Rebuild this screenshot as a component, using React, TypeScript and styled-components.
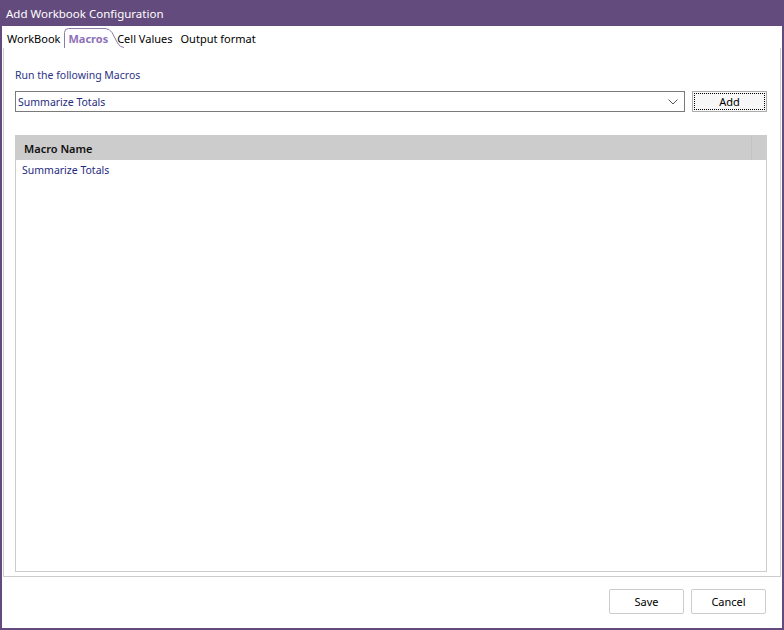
import React from 'react';
import styled, { createGlobalStyle } from 'styled-components';

const GlobalStyle = createGlobalStyle`
  html, body {
    margin: 0;
    padding: 0;
    background: #ffffff;
  }
  body {
    font-family: 'Noto Sans', 'Open Sans', Arial, sans-serif;
  }
  * {
    box-sizing: border-box;
  }
`;

const Window = styled.div`
  width: 784px;
  height: 630px;
  display: flex;
  flex-direction: column;
  background: #ffffff;
  border: 2px solid #644b7d;
  border-top: none;
`;

const TitleBar = styled.div`
  height: 26px;
  flex: none;
  display: flex;
  align-items: center;
  margin: 0 -2px;
  padding-left: 6px;
  background: #644b7d;
  color: #ffffff;
  font-size: 11.5px;
`;

const TabStrip = styled.div`
  height: 22px;
  flex: none;
  display: flex;
  align-items: flex-end;
  padding-left: 1px;
`;

const Tab = styled.div<{ $active?: boolean }>`
  position: relative;
  height: 20px;
  display: flex;
  align-items: center;
  padding: ${(p) => (p.$active ? '0 14px 0 4px' : '0 4px')};
  margin-right: ${(p) => (p.$active ? '-9px' : '0')};
  font-size: 11px;
  font-weight: ${(p) => (p.$active ? 700 : 400)};
  color: ${(p) => (p.$active ? '#8c72b8' : '#000000')};
  span {
    position: relative;
  }
`;

const TabShape = styled.svg`
  position: absolute;
  left: 0;
  top: 0;
`;

const TabPanel = styled.div`
  flex: 1;
  margin: 0 1px;
  display: flex;
  flex-direction: column;
  border: 1px solid #cccccc;
  border-top: none;
  padding: 20px 13px 4px 11px;
`;

const Label = styled.div`
  font-size: 10.5px;
  line-height: 15px;
  color: #2b3486;
  margin-bottom: 8px;
`;

const ComboRow = styled.div`
  display: flex;
  align-items: center;
  gap: 7px;
  height: 21px;
`;

const Combo = styled.div`
  flex: 1;
  height: 21px;
  display: flex;
  align-items: center;
  justify-content: space-between;
  padding: 0 6px 0 2px;
  border: 1px solid #7a7a7a;
  font-size: 10.5px;
  color: #1f2c80;
`;

const Button = styled.button<{ $focused?: boolean }>`
  width: 75px;
  height: ${(p) => (p.$focused ? '21px' : '25px')};
  padding: 0;
  position: relative;
  background: ${(p) => (p.$focused ? '#f7f7f7' : '#ffffff')};
  border: 1px solid ${(p) => (p.$focused ? '#adadad' : '#cccccc')};
  border-radius: ${(p) => (p.$focused ? '0' : '2px')};
  font-family: 'Noto Sans', 'Open Sans', Arial, sans-serif;
  font-size: 11px;
  color: #000000;
  outline: ${(p) => (p.$focused ? '1px dotted #000000' : 'none')};
  outline-offset: -3px;
`;

const Grid = styled.div`
  flex: 1;
  margin-top: 23px;
  display: flex;
  flex-direction: column;
  border: 1px solid #cccccc;
`;

const GridHeader = styled.div`
  height: 24px;
  flex: none;
  display: flex;
  background: #cccccc;
`;

const HeaderCell = styled.div<{ $fill?: boolean }>`
  display: flex;
  align-items: center;
  padding-left: 8px;
  font-size: 11px;
  font-weight: 600;
  color: #111111;
  flex: ${(p) => (p.$fill ? '1' : 'none')};
  width: ${(p) => (p.$fill ? 'auto' : '736px')};
  border-right: ${(p) => (p.$fill ? 'none' : '1px solid #c2c2c2')};
`;

const GridRow = styled.div`
  height: 19px;
  display: flex;
  align-items: center;
  padding: 1px 0 0 6px;
  font-size: 10.5px;
  color: #1f2c80;
`;

const Footer = styled.div`
  height: 51px;
  flex: none;
  display: flex;
  justify-content: flex-end;
  align-items: flex-start;
  gap: 7px;
  padding: 12px 16px 0 0;
`;

const Chevron = () => (
  <svg width="10" height="6" viewBox="0 0 10 6">
    <path d="M0.5 0.5 L5 5 L9.5 0.5" fill="none" stroke="#555555" strokeWidth="1" />
  </svg>
);

const App: React.FC = () => {
  return (
    <>
      <GlobalStyle />
      <Window>
        <TitleBar>Add Workbook Configuration</TitleBar>
        <TabStrip>
          <Tab><span>WorkBook</span></Tab>
          <Tab $active>
            <TabShape width="60" height="20" viewBox="0 0 60 20">
              <path
                d="M0.5 20 V4.5 Q0.5 0.5 4.5 0.5 H41 Q45.5 0.5 48 4.5 L53.5 15 Q56 19.5 60 19.5"
                fill="#ffffff"
                stroke="#8d7ca9"
                strokeWidth="1"
              />
            </TabShape>
            <span>Macros</span>
          </Tab>
          <Tab><span>Cell Values</span></Tab>
          <Tab><span>Output format</span></Tab>
        </TabStrip>
        <TabPanel>
          <Label>Run the following Macros</Label>
          <ComboRow>
            <Combo>
              <span>Summarize Totals</span>
              <Chevron />
            </Combo>
            <Button $focused>Add</Button>
          </ComboRow>
          <Grid>
            <GridHeader>
              <HeaderCell>Macro Name</HeaderCell>
              <HeaderCell $fill />
            </GridHeader>
            <GridRow>Summarize Totals</GridRow>
          </Grid>
        </TabPanel>
        <Footer>
          <Button>Save</Button>
          <Button>Cancel</Button>
        </Footer>
      </Window>
    </>
  );
};

export default App;
